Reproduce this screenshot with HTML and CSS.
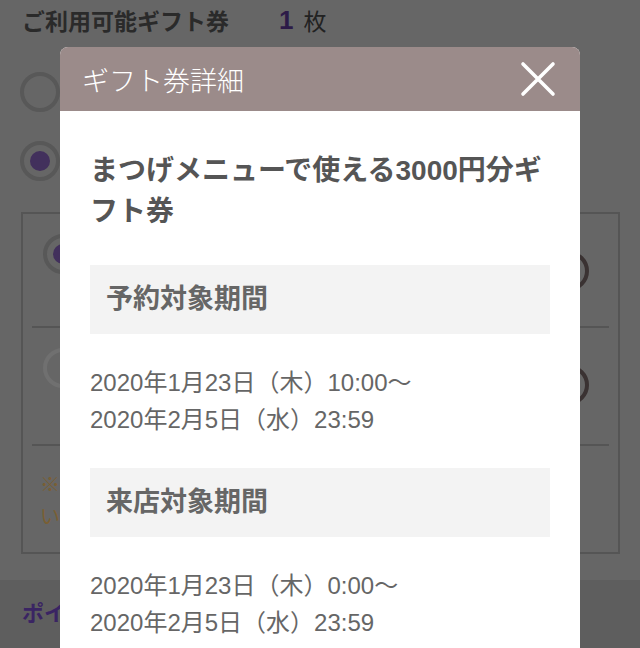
FILE: index.html
```html
<!DOCTYPE html>
<html lang="ja">
<head>
<meta charset="utf-8">
<title>ギフト券詳細</title>
<link rel="stylesheet" href="styles.css">
</head>
<body>
<div class="page">
  <div class="count-row">
    <span class="count-label">ご利用可能ギフト券</span>
    <span class="count-num">1</span>
    <span class="count-unit">枚</span>
  </div>
  <div class="options">
    <div class="opt-row"><span class="radio"></span></div>
    <div class="opt-row"><span class="radio radio-on"></span></div>
  </div>
  <div class="gift-box">
    <div class="gift-row">
      <span class="radio radio-on"></span>
      <span class="check"></span>
    </div>
    <div class="gift-row">
      <span class="radio radio-off"></span>
      <span class="check"></span>
    </div>
    <p class="notice">※ギフト券は、ご予約1件につき1枚のみご利用<br>いただけます。</p>
  </div>
  <div class="band">
    <h2 class="band-title">ポイント</h2>
  </div>
</div>

<div class="modal">
  <div class="modal-head">
    <span class="modal-title">ギフト券詳細</span>
    <svg class="close" width="36" height="36" viewBox="0 0 36 36" aria-label="閉じる">
      <path d="M3 3 L33 33 M33 3 L3 33" stroke="#fff" stroke-width="3.6" stroke-linecap="round" fill="none"/>
    </svg>
  </div>
  <div class="modal-body">
    <h3 class="gift-name">まつげメニューで使える3000円分ギフト券</h3>
    <div class="sec-head">予約対象期間</div>
    <p class="dates">2020年1月23日（木）10:00〜<br>2020年2月5日（水）23:59</p>
    <div class="sec-head">来店対象期間</div>
    <p class="dates">2020年1月23日（木）0:00〜<br>2020年2月5日（水）23:59</p>
  </div>
</div>
</body>
</html>
```

FILE: styles.css
```css
html, body {
  margin: 0;
  padding: 0;
}
body {
  background: #666666;
  font-family: "Liberation Sans", "Noto Sans CJK JP", sans-serif;
  width: 640px;
  height: 648px;
  overflow: hidden;
}
.page {
  display: flex;
  flex-direction: column;
}
.count-row {
  height: 40px;
  display: flex;
  align-items: center;
  padding-left: 22px;
  color: #2a2a2a;
}
.count-label {
  font-size: 23px;
  font-weight: 700;
}
.count-num {
  margin-left: 50px;
  font-size: 26px;
  font-weight: 700;
  color: #2d1b48;
}
.count-unit {
  margin-left: 10px;
  font-size: 23px;
  color: #222222;
}
.options {
  margin-top: 17px;
  display: flex;
  flex-direction: column;
}
.opt-row {
  height: 69px;
  display: flex;
  align-items: center;
  padding-left: 20px;
}
.radio {
  box-sizing: border-box;
  width: 40px;
  height: 40px;
  border: 4px solid #585858;
  border-radius: 50%;
  display: flex;
  align-items: center;
  justify-content: center;
  flex: none;
}
.radio-on::after {
  content: "";
  width: 20px;
  height: 20px;
  border-radius: 50%;
  background: #42305c;
}
.radio-off {
  border-color: #707070;
}
.gift-box {
  margin: 17px 20px 0 21px;
  border: 2px solid #555555;
  height: 338px;
  display: flex;
  flex-direction: column;
}
.gift-row {
  height: 114px;
  margin: 0 9px;
  padding: 20px 20px 0 11px;
  box-sizing: border-box;
  border-bottom: 2px solid #555555;
  display: flex;
  justify-content: space-between;
  align-items: flex-start;
}
.gift-row:nth-child(2) {
  height: 118px;
}
.check {
  box-sizing: border-box;
  width: 40px;
  height: 40px;
  border: 4px solid #3a3232;
  border-radius: 50%;
  margin-top: 17px;
  flex: none;
}
.notice {
  margin: 0;
  padding: 23px 0 0 17px;
  font-size: 20px;
  line-height: 32px;
  color: #7a5f33;
}
.band {
  margin-top: 26px;
  background: #5e5e5e;
  height: 120px;
  padding-left: 22px;
}
.band-title {
  margin: 0;
  padding-top: 18px;
  font-size: 22px;
  line-height: 32px;
  font-weight: 700;
  color: #3a2463;
}

/* modal */
.modal {
  position: fixed;
  left: 60px;
  top: 47px;
  width: 520px;
  height: 700px;
  background: #ffffff;
  border-radius: 8px 8px 0 0;
  overflow: hidden;
}
.modal-head {
  height: 64px;
  background: #9b8b8a;
  display: flex;
  align-items: center;
  justify-content: space-between;
  padding: 0 24px 0 22px;
}
.modal-title {
  color: #ffffff;
  font-size: 27px;
  font-weight: 300;
  font-family: "Noto Sans CJK JP", sans-serif;
}
.close {
  display: block;
}
.modal-body {
  padding: 39px 30px 0 30px;
}
.gift-name {
  margin: 0;
  font-size: 28px;
  line-height: 41px;
  font-weight: 700;
  color: #555555;
}
.sec-head {
  margin-top: 33px;
  background: #f3f3f3;
  padding: 16px 16px;
  font-size: 27px;
  line-height: 37px;
  font-weight: 700;
  color: #666666;
}
.dates + .sec-head {
  margin-top: 0;
}
.dates {
  margin: 30px 0;
  font-size: 24px;
  line-height: 37px;
  color: #666666;
}
```
